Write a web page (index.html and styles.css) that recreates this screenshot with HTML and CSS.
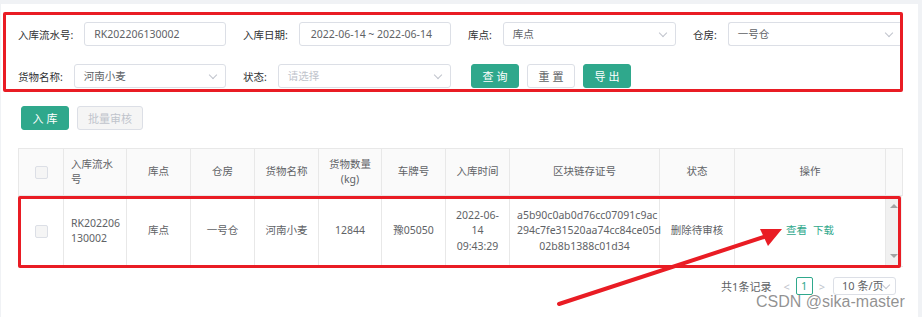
FILE: index.html
```html
<!DOCTYPE html>
<html lang="zh-CN">
<head>
    <meta charset="UTF-8">
    <meta name="viewport" content="width=device-width, initial-scale=1.0">
    <title>入库管理</title>
    <link rel="stylesheet" href="styles.css">
</head>
<body>
    <div class="page">
        <form class="search">
            <div class="search-row">
                <div class="form-item">
                    <label class="label">入库流水号:</label>
                    <div class="control"><span class="value">RK202206130002</span></div>
                </div>
                <div class="form-item">
                    <label class="label">入库日期:</label>
                    <div class="control control-date"><span class="value">2022-06-14 ~ 2022-06-14</span></div>
                </div>
                <div class="form-item">
                    <label class="label">库点:</label>
                    <div class="control"><span class="value">库点</span><span class="arrow"></span></div>
                </div>
                <div class="form-item form-item-last">
                    <label class="label">仓房:</label>
                    <div class="control control-cut"><span class="value">一号仓</span><span class="arrow"></span></div>
                </div>
            </div>
            <div class="search-row">
                <div class="form-item">
                    <label class="label">货物名称:</label>
                    <div class="control"><span class="value">河南小麦</span><span class="arrow"></span></div>
                </div>
                <div class="form-item">
                    <label class="label">状态:</label>
                    <div class="control"><span class="value placeholder">请选择</span><span class="arrow"></span></div>
                </div>
                <div class="search-buttons">
                    <button type="button" class="btn btn-primary">查 询</button>
                    <button type="button" class="btn">重 置</button>
                    <button type="button" class="btn btn-primary">导 出</button>
                </div>
            </div>
        </form>

        <div class="toolbar">
            <button type="button" class="btn btn-primary">入 库</button>
            <button type="button" class="btn btn-disabled">批量审核</button>
        </div>

        <table class="grid">
            <colgroup>
                <col style="width:45px">
                <col style="width:63px">
                <col style="width:64px">
                <col style="width:64px">
                <col style="width:64px">
                <col style="width:63px">
                <col style="width:64px">
                <col style="width:64px">
                <col style="width:150px">
                <col style="width:75px">
                <col style="width:151px">
                <col style="width:17px">
            </colgroup>
            <thead>
                <tr>
                    <th><span class="checkbox"></span></th>
                    <th class="left">入库流水号</th>
                    <th>库点</th>
                    <th>仓房</th>
                    <th>货物名称</th>
                    <th>货物数量(kg)</th>
                    <th>车牌号</th>
                    <th>入库时间</th>
                    <th>区块链存证号</th>
                    <th>状态</th>
                    <th>操作</th>
                    <th class="gutter"></th>
                </tr>
            </thead>
            <tbody>
                <tr>
                    <td><span class="checkbox"></span></td>
                    <td class="left">RK202206<br>130002</td>
                    <td>库点</td>
                    <td>一号仓</td>
                    <td>河南小麦</td>
                    <td>12844</td>
                    <td>豫05050</td>
                    <td>2022-06-14 09:43:29</td>
                    <td>a5b90c0ab0d76cc07091c9ac<br>294c7fe31520aa74cc84ce05d<br>02b8b1388c01d34</td>
                    <td>删除待审核</td>
                    <td><a class="link">查看</a><a class="link">下载</a></td>
                    <td class="scroll">
                        <div class="scrollbar">
                            <span class="tri tri-up"></span>
                            <span class="tri tri-down"></span>
                        </div>
                    </td>
                </tr>
            </tbody>
        </table>

        <div class="pager">
            <span class="total">共1条记录</span>
            <span class="pager-nav">&lt;</span>
            <span class="pager-item">1</span>
            <span class="pager-nav">&gt;</span>
            <span class="pager-size">10 条/页<span class="arrow"></span></span>
        </div>

        <!-- annotations drawn on the screenshot -->
        <div class="mark mark-search"></div>
        <div class="mark mark-row"></div>
        <svg class="pointer" width="922" height="317" viewBox="0 0 922 317">
            <line x1="559" y1="304" x2="770" y2="235" stroke="#e91c24" stroke-width="4" stroke-linecap="round"/>
            <polygon points="782,229 760,229 768,246" fill="#e91c24"/>
        </svg>
        <div class="watermark">CSDN @sika-master</div>
    </div>
</body>
</html>
```

FILE: styles.css
```css
body {
    margin: 0;
    background-color: #f0f2f5;
    font-family: "Noto Sans", "Noto Sans CJK SC", sans-serif;
    font-size: 10.5px;
    color: #606266;
}
.page {
    position: relative;
    margin: 4px 4px 0 1px;
    height: 313px;
    background: #fff;
    overflow: hidden;
}

/* search form */
.search {
    padding: 18px 0 0 17px;
}
.search-row {
    display: flex;
    align-items: center;
    height: 24px;
    margin-bottom: 18px;
}
.form-item {
    display: flex;
    align-items: center;
    width: 208px;
    margin-right: 17px;
    flex-shrink: 0;
}
.form-item-last {
    width: 209px;
    margin-right: 0;
}
.label {
    flex-shrink: 0;
    padding-right: 11px;
    color: #303133;
    white-space: nowrap;
}
.control {
    position: relative;
    flex: 1;
    height: 22px;
    line-height: 22px;
    border: 1px solid #dcdfe6;
    border-radius: 3px;
    padding-left: 9px;
    white-space: nowrap;
}
.control-date {
    padding-left: 11px;
}
.control-cut {
    border-right: none;
    border-radius: 3px 0 0 3px;
}
.value {
    color: #606266;
}
.placeholder {
    color: #c0c4cc;
}
.arrow {
    position: absolute;
    right: 9px;
    top: 7px;
    width: 5px;
    height: 5px;
    border-right: 1px solid #c0c4cc;
    border-bottom: 1px solid #c0c4cc;
    transform: rotate(45deg);
}
.control-cut .arrow {
    right: 10px;
}
.search-buttons {
    display: flex;
    gap: 8px;
    margin-left: 3px;
}

/* buttons */
.btn {
    height: 24px;
    min-width: 48px;
    padding: 0 8px;
    border: 1px solid #dcdfe6;
    border-radius: 3px;
    background: #fff;
    color: #606266;
    font-family: inherit;
    font-size: 11px;
    cursor: pointer;
}
.btn-primary {
    background-color: #2fa88c;
    border-color: #2fa88c;
    color: #fff;
}
.btn-disabled {
    width: 66px;
    background: #f5f5f5;
    color: #c0c4cc;
    cursor: not-allowed;
}
.toolbar {
    display: flex;
    gap: 8px;
    padding-left: 20px;
}

/* table */
.grid {
    margin: 18px 0 0 17px;
    width: 884px;
    table-layout: fixed;
    border-collapse: collapse;
}
.grid th, .grid td {
    border: 1px solid #e8e8e8;
    padding: 0 7px;
    text-align: center;
    line-height: 15.5px;
    font-weight: normal;
    color: #606266;
}
.grid th {
    height: 46px;
    background: #fafafa;
}
.grid td {
    height: 70px;
}
.grid .left {
    text-align: left;
}
.grid .gutter {
    padding: 0;
}
.grid .scroll {
    padding: 0;
    position: relative;
    border-right: none;
}
.scrollbar {
    position: absolute;
    left: 0;
    top: 0;
    bottom: 0;
    width: 16px;
    background: #f1f1f1;
}
.tri {
    position: absolute;
    left: 4px;
    width: 0;
    height: 0;
    border-left: 4px solid transparent;
    border-right: 4px solid transparent;
}
.tri-up {
    top: 8px;
    border-bottom: 4px solid #a3a3a3;
}
.tri-down {
    bottom: 8px;
    border-top: 4px solid #a3a3a3;
}
.checkbox {
    display: inline-block;
    vertical-align: middle;
    width: 11px;
    height: 11px;
    border: 1px solid #dcdfe6;
    border-radius: 2px;
    background: #f5f5f5;
}
.link {
    color: #2fa88c;
    margin: 0 3px;
    cursor: pointer;
}

/* pagination */
.pager {
    display: flex;
    justify-content: flex-end;
    align-items: center;
    gap: 6px;
    margin: 10px 22px 0 0;
    height: 18px;
    font-size: 11px;
}
.total {
    margin-right: 6px;
    color: #606266;
}
.pager-nav {
    color: #c0c4cc;
}
.pager-item {
    width: 15px;
    height: 16px;
    line-height: 16px;
    text-align: center;
    border: 1px solid #2fa88c;
    border-radius: 2px;
    color: #2fa88c;
}
.pager-size {
    position: relative;
    width: 53px;
    height: 16px;
    line-height: 16px;
    padding-left: 8px;
    border: 1px solid #dcdfe6;
    border-radius: 3px;
    margin-left: 2px;
}
.pager-size .arrow {
    top: 4px;
    right: 6px;
}

/* annotations */
.mark {
    position: absolute;
    border: 3.5px solid #e91c24;
    border-radius: 2px;
    pointer-events: none;
}
.mark-search {
    left: 2px;
    top: 8px;
    width: 894px;
    height: 74px;
}
.mark-row {
    left: 17px;
    top: 192px;
    width: 877px;
    height: 66px;
}
.pointer {
    position: absolute;
    left: -1px;
    top: -4px;
    pointer-events: none;
}
.watermark {
    position: absolute;
    left: 755px;
    top: 289px;
    font-family: "Liberation Sans", Arial, sans-serif;
    font-size: 16px;
    color: rgba(110, 110, 110, 0.75);
    pointer-events: none;
}
```
